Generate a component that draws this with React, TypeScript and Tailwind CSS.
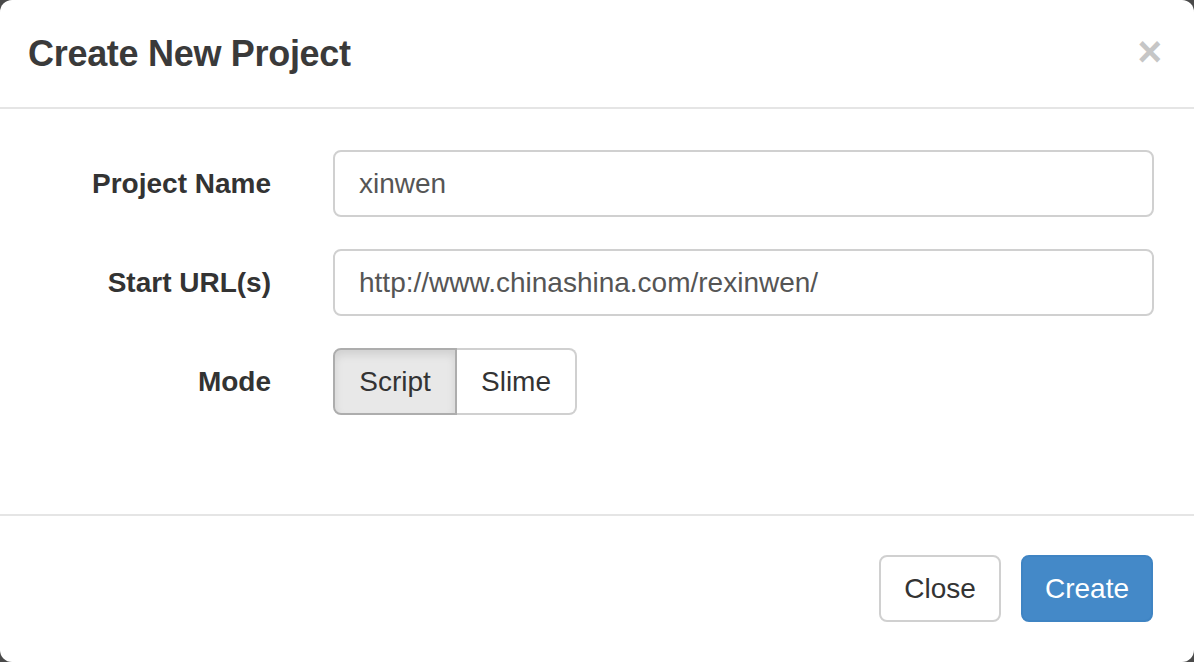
export default function App() {
  return (
    <div className="h-[662px] w-[1194px] bg-[#4a4a4a] font-['Liberation_Sans',Arial,sans-serif] text-[#333]">
      <div className="flex h-full w-full flex-col rounded-[12px] bg-white">
        {/* Header */}
        <div className="flex h-[109px] shrink-0 items-center justify-between border-b-2 border-[#e5e5e5] pl-[28px] pr-[32px]">
          <h4 className="text-[36px] font-bold leading-none tracking-[-0.3px] text-[#3a3a3a]">Create New Project</h4>
          <button className="mt-[-4px] text-[42px] font-bold leading-none text-[#c6c6c6]">×</button>
        </div>

        {/* Body */}
        <div className="flex flex-1 flex-col gap-[32px] pt-[41px] text-[28px]">
          <div className="flex items-center">
            <label className="w-[271px] text-right font-bold">Project Name</label>
            <div className="ml-[62px] flex h-[67px] w-[821px] items-center rounded-[8px] border-2 border-[#d0d0d0] px-[24px] text-[#555]">
              xinwen
            </div>
          </div>
          <div className="flex items-center">
            <label className="w-[271px] text-right font-bold">Start URL(s)</label>
            <div className="ml-[62px] flex h-[67px] w-[821px] items-center rounded-[8px] border-2 border-[#d0d0d0] px-[24px] text-[#555]">
              http://www.chinashina.com/rexinwen/
            </div>
          </div>
          <div className="flex items-center">
            <label className="w-[271px] text-right font-bold">Mode</label>
            <div className="ml-[62px] flex h-[67px]">
              <button className="flex w-[124px] items-center justify-center rounded-l-[8px] border-2 border-[#adadad] bg-[#e8e8e8] shadow-[inset_0_5px_8px_rgba(0,0,0,0.1)]">
                Script
              </button>
              <button className="flex w-[120px] items-center justify-center rounded-r-[8px] border-2 border-l-0 border-[#d0d0d0] bg-white">
                Slime
              </button>
            </div>
          </div>
        </div>

        {/* Footer */}
        <div className="flex h-[148px] shrink-0 items-start justify-end gap-[20px] border-t-2 border-[#e5e5e5] pr-[41px] pt-[39px] text-[28px]">
          <button className="flex h-[67px] w-[122px] items-center justify-center rounded-[8px] border-2 border-[#d0d0d0] bg-white">
            Close
          </button>
          <button className="flex h-[67px] w-[132px] items-center justify-center rounded-[8px] border-2 border-[#3f84c3] bg-[#4489c8] text-white">
            Create
          </button>
        </div>
      </div>
    </div>
  );
}
